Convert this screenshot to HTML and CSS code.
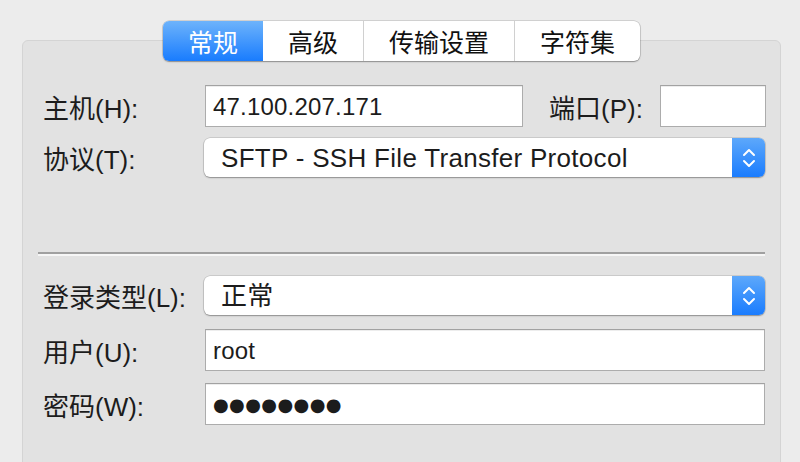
FILE: index.html
```html
<!DOCTYPE html>
<html lang="zh-CN">
<head>
<meta charset="utf-8">
<title>站点设置</title>
<link rel="stylesheet" href="styles.css">
</head>
<body>
<div class="window">
  <div class="tabs">
    <div class="tab active">常规</div>
    <div class="tab">高级</div>
    <div class="tab">传输设置</div>
    <div class="tab">字符集</div>
  </div>
  <div class="panel">
    <div class="row row-host">
      <div class="label">主机(H):</div>
      <div class="field host">47.100.207.171</div>
      <div class="label port-label">端口(P):</div>
      <div class="field port"></div>
    </div>
    <div class="row row-proto">
      <div class="label">协议(T):</div>
      <div class="select">
        <span class="select-text">SFTP - SSH File Transfer Protocol</span>
        <span class="stepper">
          <svg width="14" height="22" viewBox="0 0 14 22"><path d="M2 8 L7 3 L12 8 M2 14 L7 19 L12 14" fill="none" stroke="#fff" stroke-width="2" stroke-linecap="round" stroke-linejoin="round"/></svg>
        </span>
      </div>
    </div>
    <div class="separator"></div>
    <div class="row row-login">
      <div class="label">登录类型(L):</div>
      <div class="select">
        <span class="select-text">正常</span>
        <span class="stepper">
          <svg width="14" height="22" viewBox="0 0 14 22"><path d="M2 8 L7 3 L12 8 M2 14 L7 19 L12 14" fill="none" stroke="#fff" stroke-width="2" stroke-linecap="round" stroke-linejoin="round"/></svg>
        </span>
      </div>
    </div>
    <div class="row row-user">
      <div class="label">用户(U):</div>
      <div class="field">root</div>
    </div>
    <div class="row row-pass">
      <div class="label">密码(W):</div>
      <div class="field dots">●●●●●●●●</div>
    </div>
  </div>
</div>
</body>
</html>
```

FILE: styles.css
```css
html, body {
  margin: 0;
  padding: 0;
  background: #ececec;
  height: 100%;
  overflow: hidden;
}
body {
  font-family: "Liberation Sans", "Noto Sans CJK SC", sans-serif;
  font-size: 26px;
  color: #1c1c1c;
}
.window {
  padding: 21px 0 0 3px;
}
.tabs {
  display: flex;
  position: relative;
  z-index: 2;
  width: max-content;
  margin: 0 auto -21px;
  background: #fff;
  border-radius: 6px;
  box-shadow: 0 0 0 0.5px rgba(0,0,0,0.22), 0 1px 1.5px rgba(0,0,0,0.3);
}
.tab {
  height: 40px;
  line-height: 40px;
  padding: 0 25px;
  font-family: "Noto Sans CJK SC", sans-serif;
  font-size: 25px;
  color: #111;
  border-left: 1px solid #d0d0d0;
}
.tab:first-child {
  border-left: none;
}
.tab.active {
  color: #fff;
  background: linear-gradient(#6db3fb, #197cfe);
  border-radius: 6px 0 0 6px;
}
.tab.active + .tab {
  border-left: none;
}
.panel {
  margin: 0 19px 0 19px;
  height: 460px;
  background: #e2e2e2;
  border: 1px solid #d4d4d4;
  border-radius: 6px;
  box-sizing: border-box;
  padding: 0 15px 0 20px;
}
.row {
  display: flex;
  align-items: center;
}
.label {
  width: 162px;
  flex: none;
  white-space: nowrap;
}
.row-host { margin-top: 44px; height: 42px; }
.row-proto { margin-top: 11px; height: 39px; }
.row-login { margin-top: 20px; height: 39px; }
.row-user { margin-top: 14px; height: 42px; }
.row-pass { margin-top: 12px; height: 42px; }
.field {
  box-sizing: border-box;
  height: 42px;
  flex: 1;
  background: #fff;
  border: 1px solid #acacac;
  border-top-color: #a2a2a2;
  box-shadow: inset 0 1px 0 #ededed;
  padding-left: 7px;
  line-height: 41px;
  font-size: 24px;
  letter-spacing: 0.2px;
}
.field.host {
  flex: none;
  width: 318px;
}
.port-label {
  width: auto;
  margin-left: 26px;
  margin-right: 17px;
}
.field.port {
  flex: none;
  width: 106px;
}
.field.dots {
  font-family: "DejaVu Sans", sans-serif;
  font-size: 18px;
  letter-spacing: 0.4px;
}
.select {
  flex: 1;
  height: 39px;
  margin-left: -1px;
  display: flex;
  align-items: stretch;
  background: #fff;
  border-radius: 6px;
  box-shadow: 0 0 0 0.5px rgba(0,0,0,0.2), 0 1px 1.5px rgba(0,0,0,0.3);
}
.select-text {
  flex: 1;
  padding-left: 17px;
  line-height: 40px;
  letter-spacing: 0.3px;
}
.stepper {
  width: 33px;
  flex: none;
  display: flex;
  align-items: center;
  justify-content: center;
  background: linear-gradient(#5da8fb, #1a7cfe);
  border-radius: 0 6px 6px 0;
}
.separator {
  margin: 75px 0 0 -5px;
  height: 2px;
  background: #a0a0a0;
  border-bottom: 2px solid #f6f6f6;
}
```
